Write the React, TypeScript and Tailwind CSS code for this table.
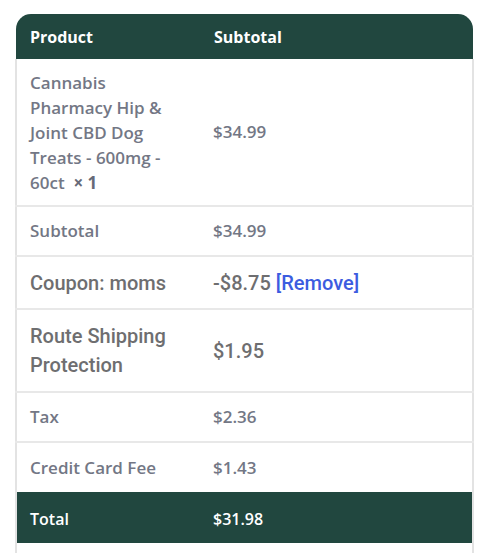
const fees = [
  { label: "Tax", value: "$2.36" },
  { label: "Credit Card Fee", value: "$1.43" },
];

export default function App() {
  return (
    <div className="h-[553px] w-[500px] bg-white pl-[15px] pt-[14px] font-['Open_Sans',sans-serif]">
      <table className="w-[459px] table-fixed border-collapse">
        <colgroup>
          <col className="w-[197px]" />
          <col />
        </colgroup>
        <thead className="font-['Open_Sans',sans-serif] text-[16px] text-white">
          <tr className="h-[45px] bg-[#21473f] text-left">
            <th className="rounded-tl-[15px] pl-[14px] font-bold">Product</th>
            <th className="rounded-tr-[15px] pl-[1px] font-bold">Subtotal</th>
          </tr>
        </thead>
        <tbody className="border-x-2 border-[#e3e3e3] font-['Open_Sans',sans-serif] text-[17px] font-semibold text-[#737785]">
          <tr className="h-[147px] border-b-2 border-[#e8e8e8]">
            <td className="pl-[13px] pr-[30px] leading-[25px]">
              Cannabis Pharmacy Hip &amp; Joint CBD Dog Treats - 600mg - 60ct&nbsp;{" "}
              <strong className="font-bold text-[#666a78]">×&nbsp;1</strong>
            </td>
            <td>$34.99</td>
          </tr>
          <tr className="h-[50px] border-b-2 border-[#e8e8e8]">
            <td className="pl-[13px]">Subtotal</td>
            <td>$34.99</td>
          </tr>
          <tr className="h-[53px] border-b-2 border-[#e8e8e8] font-['Roboto',sans-serif] text-[20px] font-medium text-[#6e6e70]">
            <td className="pl-[13px]">Coupon: moms</td>
            <td>
              -$8.75 <a className="text-[#3c5ce0]">[Remove]</a>
            </td>
          </tr>
          <tr className="h-[83px] border-b-2 border-[#e8e8e8] font-['Roboto',sans-serif] text-[20px] font-medium text-[#6e6e70]">
            <td className="pl-[13px] leading-[29px]">
              Route Shipping
              <br />
              Protection
            </td>
            <td>$1.95</td>
          </tr>
          {fees.map((fee, i) => (
            <tr
              key={fee.label}
              className={
                i === 0 ? "h-[50px] border-b-2 border-[#e8e8e8]" : "h-[50px]"
              }
            >
              <td className="pl-[13px]">{fee.label}</td>
              <td>{fee.value}</td>
            </tr>
          ))}
          <tr className="h-[51px] bg-[#21473f] text-[16px] text-white">
            <td className="pl-[13px] pt-[2px]">Total</td>
            <td className="pt-[2px]">$31.98</td>
          </tr>
          <tr className="h-[12px]">
            <td />
            <td />
          </tr>
        </tbody>
      </table>
    </div>
  );
}
